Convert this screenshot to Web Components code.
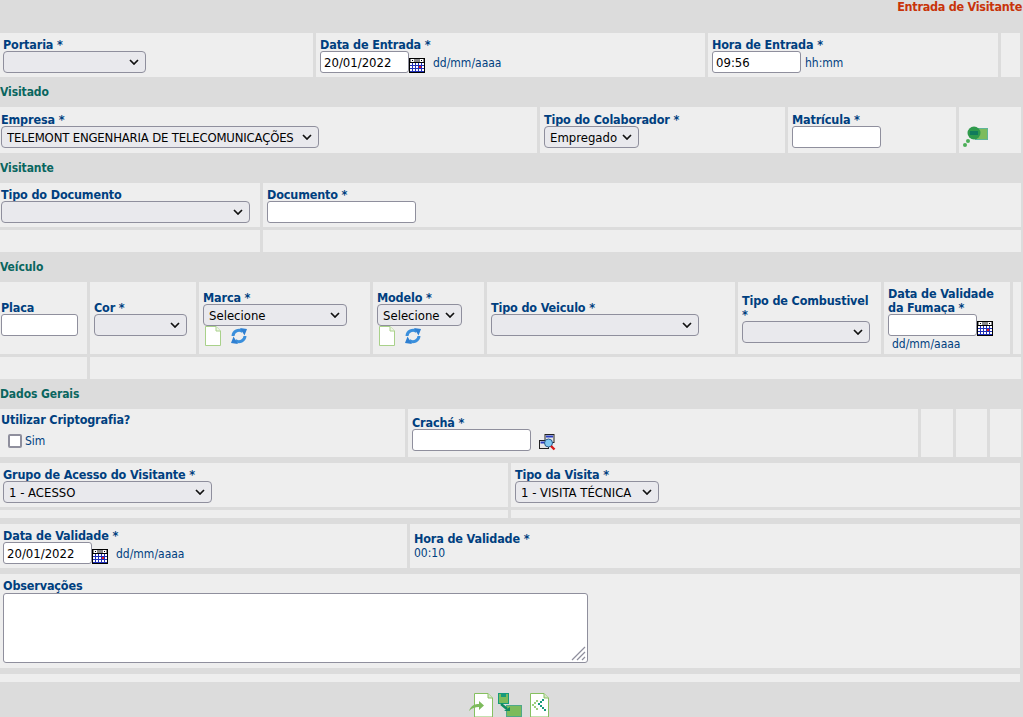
<!DOCTYPE html>
<html lang="pt-BR">
<head>
<meta charset="utf-8">
<title>Entrada de Visitante</title>
<style>
  html, body { margin: 0; padding: 0; background: #dcdcdc; overflow: hidden; }
  body { font: 12px "DejaVu Sans Condensed", "DejaVu Sans", sans-serif; color: #003f7f; }
</style>
</head>
<body>
<x-page>
  <x-title>Entrada de Visitante</x-title>

  <x-row style="--cols:313px 389px 290px 19px;--h:44px">
    <x-field label="Portaria *" style="--pad:3px"><x-select style="width:143px"></x-select></x-field>
    <x-field label="Data de Entrada *"><x-input value="20/01/2022"></x-input><x-icon name="calendar"></x-icon><x-hint style="margin-left:8px">dd/mm/aaaa</x-hint></x-field>
    <x-field label="Hora de Entrada *"><x-input value="09:56"></x-input><x-hint style="margin-left:4px">hh:mm</x-hint></x-field>
    <x-field></x-field>
  </x-row>

  <x-section>Visitado</x-section>
  <x-row style="--cols:537px 245px 168px 62px;--h:46px">
    <x-field label="Empresa *" style="--pad:1px"><x-select style="width:318px;letter-spacing:-.18px">TELEMONT ENGENHARIA DE TELECOMUNICAÇÕES</x-select></x-field>
    <x-field label="Tipo do Colaborador *"><x-select style="width:95px">Empregado</x-select></x-field>
    <x-field label="Matrícula *"><x-input></x-input></x-field>
    <x-field style="--pad:4px;--shift:7px"><x-icon name="find"></x-icon></x-field>
  </x-row>

  <x-section>Visitante</x-section>
  <x-row style="--cols:260px 758px;--h:44px">
    <x-field label="Tipo do Documento" style="--pad:1px"><x-select style="width:249px"></x-select></x-field>
    <x-field label="Documento *"><x-input style="width:149px"></x-input></x-field>
  </x-row>
  <x-row style="--cols:260px 758px;--h:22px;--top:3px"><x-field></x-field><x-field></x-field></x-row>

  <x-section>Veículo</x-section>
  <x-row style="--cols:87px 106px 171px 111px 248px 143px 126px 8px;--h:72px">
    <x-field label="Placa" style="--pad:1px"><x-input style="width:77px"></x-input></x-field>
    <x-field label="Cor *"><x-select style="width:93px"></x-select></x-field>
    <x-field label="Marca *">
      <x-select style="width:144px">Selecione</x-select>
      <x-icons><x-icon name="page"></x-icon><x-icon name="refresh" style="margin-left:9px"></x-icon></x-icons>
    </x-field>
    <x-field label="Modelo *">
      <x-select style="width:85px">Selecione</x-select>
      <x-icons><x-icon name="page"></x-icon><x-icon name="refresh" style="margin-left:9px"></x-icon></x-icons>
    </x-field>
    <x-field label="Tipo do Veiculo *"><x-select style="width:208px"></x-select></x-field>
    <x-field label="Tipo de Combustivel&#10;*"><x-select style="width:128px"></x-select></x-field>
    <x-field label="Data de Validade&#10;da Fumaça *" style="padding-top:1px"><x-input></x-input><x-icon name="calendar"></x-icon><x-hint style="flex-basis:100%;line-height:14px;margin:1px 0 0 4px">dd/mm/aaaa</x-hint></x-field>
    <x-field></x-field>
  </x-row>
  <x-row style="--cols:87px 931px;--h:22px;--top:3px"><x-field></x-field><x-field></x-field></x-row>

  <x-section>Dados Gerais</x-section>
  <x-row style="--cols:405px 510px 32px 31px 31px;--h:48px">
    <x-field label="Utilizar Criptografia?" style="--pad:1px;--shift:-2px;--lift:-3px"><x-check>Sim</x-check></x-field>
    <x-field label="Crachá *"><x-input style="width:119px"></x-input><x-icon name="search" style="margin-left:8px"></x-icon></x-field>
    <x-field></x-field><x-field></x-field><x-field></x-field>
  </x-row>
  <x-row style="--cols:508px 509px;--h:44px;--top:6px">
    <x-field label="Grupo de Acesso do Visitante *" style="--pad:3px"><x-select style="width:209px">1 - ACESSO</x-select></x-field>
    <x-field label="Tipo da Visita *"><x-select style="width:144px">1 - VISITA TÉCNICA</x-select></x-field>
  </x-row>
  <x-row style="--cols:508px 509px;--h:8px;--top:3px"><x-field></x-field><x-field></x-field></x-row>
  <x-row style="--cols:407px 610px;--h:44px;--top:6px">
    <x-field label="Data de Validade *" style="--pad:3px"><x-input value="20/01/2022"></x-input><x-icon name="calendar"></x-icon><x-hint style="margin-left:8px">dd/mm/aaaa</x-hint></x-field>
    <x-field label="Hora de Validade *"><x-hint style="line-height:16px">00:10</x-hint></x-field>
  </x-row>
  <x-row style="--cols:1020px;--h:94px;--top:6px">
    <x-field label="Observações" style="--pad:3px;--lift:0px"><x-area></x-area></x-field>
  </x-row>
  <x-row style="--cols:1020px;--h:8px;--top:6px"><x-field></x-field></x-row>

  <x-toolbar>
    <x-icon name="back"></x-icon>
    <x-icon name="save"></x-icon>
    <x-icon name="share"></x-icon>
  </x-toolbar>
</x-page>

<script>
const ICONS = {
  calendar: `<svg width="16" height="16" viewBox="0 0 16 16" shape-rendering="crispEdges"><defs><pattern id="g" width="3" height="3" patternUnits="userSpaceOnUse" patternTransform="translate(1 6)"><rect width="3" height="3" fill="#1f2fb8"/><rect width="2" height="2" fill="#fff"/></pattern></defs>
    <rect y="1" width="16" height="15" fill="#000"/>
    <rect x="1" y="2" width="14" height="3" fill="#8a8a8a"/>
    <rect x="2" y="2" width="3" height="3" fill="#fff"/><rect x="3" y="3" width="1" height="1" fill="#000"/>
    <rect x="11" y="2" width="3" height="3" fill="#fff"/><rect x="12" y="3" width="1" height="1" fill="#000"/>
    <rect x="1" y="6" width="14" height="9" fill="url(#g)"/>
    <rect x="10" y="9" width="2" height="2" fill="#f01818"/></svg>`,
  page: `<svg width="16" height="20" viewBox="0 0 16 20"><path d="M.5.5H11L15.5 5V19.5H.5Z" fill="#fff" stroke="#a9d18a"/><path d="M11 .5V5H15.5" fill="#eef6e6" stroke="#a9d18a"/></svg>`,
  refresh: `<svg width="18" height="18" viewBox="0 0 18 18" fill="none" stroke="#3a8fdc" stroke-width="3"><path d="M3 9A6 6 0 0 1 12.5 4.5"/><path d="M15 9A6 6 0 0 1 5.5 13.5"/><path d="M10 1L17 2 14.5 8.5Z" fill="#2f80d2" stroke="none"/><path d="M8 17L1 16 3.5 9.5Z" fill="#2f80d2" stroke="none"/></svg>`,
  find: `<svg width="26" height="24" viewBox="0 0 26 24"><rect x="12.5" y="3.5" width="12" height="11" fill="#7dbb5c" stroke="#5fb59a"/><circle cx="11" cy="8" r="6.5" fill="#2f9a4c"/><rect x="7" y="6" width="8" height="4" fill="#117a5c"/><circle cx="5" cy="16" r="2" fill="#4cae58"/><circle cx="2" cy="20" r="2" fill="#4cae58"/></svg>`,
  search: `<svg width="17" height="17" viewBox="0 0 17 17"><rect x="6" y="0.5" width="9" height="8" fill="#e8e8e8" stroke="#222"/><rect x="7" y="1.5" width="7" height="2" fill="#2a3fc0"/><rect x="0.5" y="6.5" width="9" height="8" fill="#e8e8e8" stroke="#222"/><rect x="1.5" y="7.5" width="7" height="2" fill="#2a3fc0"/><circle cx="9.5" cy="9" r="4" fill="#7fc9f2" stroke="#2b5a88"/><path d="M12 12L15.5 15.5" stroke="#d81818" stroke-width="2.4"/></svg>`,
  back: `<svg width="24" height="24" viewBox="0 0 24 24"><path d="M5.5.5H19L23.5 5V24H5.5Z" fill="#fff" stroke="#86c060"/><path d="M19 .5V5H23.5" fill="#d5e8c5" stroke="#86c060"/><path d="M0 18C2 12 6 11 10 11V8L15 12.5 10 17V14C6 14 3 15 0 18Z" fill="#7dbb5c"/></svg>`,
  save: `<svg width="24" height="24" viewBox="0 0 24 24"><rect x="8.5" y="12.5" width="15" height="11" fill="#7dbb5c" stroke="#4ea88a"/><rect x=".5" y=".5" width="10" height="10" fill="#7dbb5c" stroke="#169a7c"/><rect x="3" y="1" width="5" height="3" fill="#169a7c"/><path d="M3 11L9 16" stroke="#0d8a60" stroke-width="2.4"/><path d="M6 18H12V14Z" fill="#0d8a60"/></svg>`,
  share: `<svg width="19" height="24" viewBox="0 0 19 24"><path d="M.5.5H14L18.5 5V24H.5Z" fill="#fff" stroke="#86c060"/><path d="M14 .5V5H18.5" fill="#d5e8c5" stroke="#86c060"/><g fill="#9ccf7c"><rect x="2" y="11" width="2" height="2"/><rect x="4" y="9" width="2" height="2"/><rect x="4" y="13" width="2" height="2"/><rect x="6" y="7" width="2" height="2"/><rect x="6" y="15" width="2" height="2"/></g><g fill="#169a7c"><rect x="8" y="10" width="2" height="2"/><rect x="10" y="8" width="2" height="2"/><rect x="10" y="12" width="2" height="2"/><rect x="12" y="14" width="2" height="2"/><rect x="14" y="16" width="2" height="2"/><rect x="12" y="6" width="2" height="2"/></g></svg>`
}

class Base extends HTMLElement {
  connectedCallback(){
    if (this.shadowRoot) return
    this.attachShadow({mode: 'open'})
    this.shadowRoot.innerHTML = this.render()
  }
}

class XPage extends Base {
  render(){ return `<style>:host{display:flex;flex-direction:column;width:1023px;height:717px;overflow:hidden}</style><slot></slot>` }
}
class XTitle extends Base {
  render(){ return `<style>:host{display:block;height:33px;line-height:14px;padding-right:1px;text-align:right;font-weight:700;font-size:12.5px;letter-spacing:-.27px;color:#c8330a;white-space:nowrap}</style><slot></slot>` }
}
class XSection extends Base {
  render(){ return `<style>:host{display:block;height:30px;line-height:31px;font-weight:700;font-size:12px;letter-spacing:-.1px;color:#0a665f}</style><slot></slot>` }
}
class XRow extends Base {
  render(){ return `<style>:host{display:grid;grid-template-columns:var(--cols);column-gap:3px;height:var(--h);margin-top:var(--top,0);flex:none}</style><slot></slot>` }
}
class XField extends Base {
  render(){
    const label = this.getAttribute('label')
    return `<style>
      :host{display:flex;flex-direction:column;justify-content:center;background:#eee;padding-left:var(--pad,4px);box-sizing:border-box;min-width:0}
      .label{font-weight:700;font-size:12.5px;letter-spacing:-.15px;line-height:14px;color:#003f7f;white-space:pre-line;transform:translateY(var(--lift,1px))}
      .ctl{display:flex;flex-wrap:wrap;align-items:flex-end;transform:translateY(var(--shift,0))}
    </style>${label ? `<div class="label">${label}</div>` : ''}<div class="ctl"><slot></slot></div>`
  }
}
class XSelect extends Base {
  render(){ return `<style>
      :host{display:flex;align-items:center;box-sizing:border-box;height:22px;background:#e9e9ed;border:1px solid #8f8f9d;border-radius:4px;padding:0 0 0 5px;font-size:13px;color:#000;white-space:nowrap;overflow:hidden}
      .t{flex:1;min-width:0;overflow:hidden}
      svg{flex:none;margin:0 6px 0 4px}
    </style><span class="t"><slot></slot></span><svg width="10" height="6" viewBox="0 0 10 6" fill="none" stroke="#111" stroke-width="1.7"><path d="M1 1L5 5 9 1"/></svg>` }
}
class XInput extends Base {
  render(){
    const v = this.getAttribute('value') || ''
    return `<style>
      :host{display:block;width:89px;height:22px;flex:none}
      input{display:block;box-sizing:border-box;width:100%;height:100%;margin:0;padding:0 3px;background:#fff;border:1px solid #8f8f9d;border-radius:3px;font:13px "DejaVu Sans Condensed","DejaVu Sans",sans-serif;color:#000;outline:0}
    </style><input type="text" value="${v}">`
  }
}
class XHint extends Base {
  render(){ return `<style>:host{display:block;font-size:12px;line-height:20px;color:#003f7f;white-space:nowrap}</style><slot></slot>` }
}
class XCheck extends Base {
  render(){ return `<style>
      :host{display:flex;align-items:center;height:16px;margin:5px 0 0 7px;font-size:12px;color:#003f7f}
      i{display:block;box-sizing:border-box;width:14px;height:14px;margin-right:3px;background:#fff;border:2px solid #8f8f9d;border-radius:2px}
    </style><i></i><slot></slot>` }
}
class XArea extends Base {
  render(){ return `<style>
      :host{display:block;position:relative;box-sizing:border-box;width:585px;height:70px;background:#fff;border:1px solid #8f8f9d;border-radius:3px}
      svg{position:absolute;right:1px;bottom:1px}
    </style><svg width="15" height="15" viewBox="0 0 15 15" stroke="#8f8f9d" stroke-width="1.2"><path d="M1 14L14 1M6 14L14 6M11 14L14 11"/></svg>` }
}
class XIcon extends Base {
  render(){ return `<style>:host{display:block;flex:none;line-height:0}</style>${ICONS[this.getAttribute('name')] || ''}` }
}
class XIcons extends Base {
  render(){ return `<style>:host{display:flex;align-items:center;flex-basis:100%;height:20px;padding-left:2px}</style><slot></slot>` }
}
class XToolbar extends Base {
  render(){ return `<style>
      :host{display:flex;justify-content:center;gap:5px;flex:none;padding:11px 0 0 0;margin-left:-6px;height:35px;box-sizing:border-box}
      ::slotted(x-icon:last-child){margin-left:3px}
    </style><slot></slot>` }
}

customElements.define('x-page', XPage)
customElements.define('x-title', XTitle)
customElements.define('x-section', XSection)
customElements.define('x-row', XRow)
customElements.define('x-field', XField)
customElements.define('x-select', XSelect)
customElements.define('x-input', XInput)
customElements.define('x-hint', XHint)
customElements.define('x-check', XCheck)
customElements.define('x-area', XArea)
customElements.define('x-icon', XIcon)
customElements.define('x-icons', XIcons)
customElements.define('x-toolbar', XToolbar)
</script>
</body>
</html>
